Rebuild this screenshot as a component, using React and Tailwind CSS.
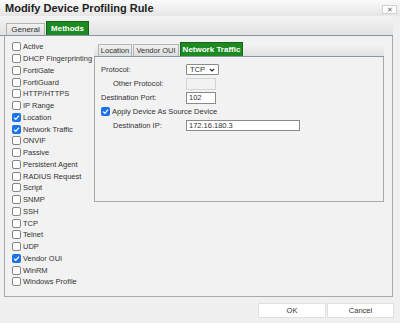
import React from "react";

const methods = [
  ["Active", false],
  ["DHCP Fingerprinting", false],
  ["FortiGate", false],
  ["FortiGuard", false],
  ["HTTP/HTTPS", false],
  ["IP Range", false],
  ["Location", true],
  ["Network Traffic", true],
  ["ONVIF", false],
  ["Passive", false],
  ["Persistent Agent", false],
  ["RADIUS Request", false],
  ["Script", false],
  ["SNMP", false],
  ["SSH", false],
  ["TCP", false],
  ["Telnet", false],
  ["UDP", false],
  ["Vendor OUI", true],
  ["WinRM", false],
  ["Windows Profile", false],
];

function Box({ checked }) {
  if (checked) {
    return (
      <span className="w-[9px] h-[9px] rounded-[2px] bg-[#1a73e8] flex items-center justify-center shrink-0">
        <svg width="7" height="7" viewBox="0 0 10 10">
          <path d="M1.5 5.2 L4 7.6 L8.6 2.2" fill="none" stroke="white" strokeWidth="1.8" />
        </svg>
      </span>
    );
  }
  return <span className="w-[9px] h-[9px] rounded-[2px] border border-[#858585] bg-white shrink-0" />;
}

function Tab({ label, active, className = "" }) {
  return active ? (
    <div
      className={
        "h-[14px] px-[6px] flex items-center whitespace-nowrap bg-[#1e8a22] border border-[#13661a] border-b-0 text-white font-bold text-[8px] " +
        className
      }
    >
      {label}
    </div>
  ) : (
    <div
      className={
        "h-[12px] px-[3px] flex items-center justify-center whitespace-nowrap bg-gradient-to-b from-[#f2f2f2] to-[#dcdcdc] border border-[#b4b4b4] border-b-0 text-[#333] text-[7.5px] " +
        className
      }
    >
      {label}
    </div>
  );
}

function FormRow({ label, indent, children }) {
  return (
    <div className="flex items-center h-[13px] mb-[1px]">
      <span className={"w-[85px] shrink-0 " + (indent ? "pl-[12px]" : "")}>{label}</span>
      {children}
    </div>
  );
}

export default function App() {
  return (
    <div
      className="w-[400px] h-[323px] bg-[#f0f0f0] flex flex-col text-[#333] overflow-hidden"
      style={{ fontFamily: '"Liberation Sans", Arial, sans-serif' }}
    >
      {/* Title */}
      <div className="h-[16px] flex items-center justify-between pl-[5px] pr-[3px] bg-gradient-to-b from-[#fafafa] to-[#e6e6e6]">
        <span className="font-bold text-[11px] text-[#222]">Modify Device Profiling Rule</span>
        <span className="w-[15px] h-[9px] mt-[2px] bg-white border border-[#d0d0d0] flex items-center justify-center text-[7px] text-[#666] leading-none">
          ✕
        </span>
      </div>

      {/* Outer tabs */}
      <div className="h-[20px] mr-[7px] flex items-end pl-[6px] gap-[1px] bg-gradient-to-b from-[#f4f4f4] to-[#e2e2e2] border-b border-[#8995a4]">
        <Tab label="General" className="w-[39px] text-[8px]" />
        <Tab label="Methods" active className="w-[43px] justify-center" />
      </div>

      {/* Panel */}
      <div className="h-[261px] ml-[4px] mr-[7px] border border-t-0 border-[#a9a9a9] flex bg-[#f2f2f2]">
        <div className="w-[89px] pl-[7px] pt-[5px] text-[7.5px]">
          {methods.map(([name, on]) => (
            <div key={name} className="h-[11.75px] flex items-center gap-[2px] whitespace-nowrap">
              <Box checked={on} />
              <span>{name}</span>
            </div>
          ))}
        </div>

        <div className="flex-1 pt-[7px] pr-[8px]">
          <div className="h-[14px] flex items-end pl-[4px] gap-[1px] bg-gradient-to-b from-[#f4f4f4] to-[#e2e2e2] border-b border-[#8995a4]">
            <Tab label="Location" className="w-[34px]" />
            <Tab label="Vendor OUI" className="w-[46px]" />
            <Tab label="Network Traffic" active className="w-[63px] justify-center" />
          </div>
          <div className="h-[145px] border border-t-0 border-[#a9a9a9] pl-[6px] pt-[6px] text-[7.5px]">
            <FormRow label="Protocol:">
              <span className="w-[33px] h-[11px] bg-white border border-[#8a8a8a] rounded-[1px] flex items-center justify-between px-[3px]">
                <span>TCP</span>
                <svg width="6" height="4" viewBox="0 0 6 4">
                  <path d="M0.8 0.8 L3 3 L5.2 0.8" fill="none" stroke="#222" strokeWidth="1.2" />
                </svg>
              </span>
            </FormRow>
            <FormRow label="Other Protocol:" indent>
              <span className="w-[30px] h-[12px] bg-[#f2f2f2] border border-[#d4d4d4]" />
            </FormRow>
            <FormRow label="Destination Port:">
              <span className="w-[30px] h-[12px] bg-white border border-[#8a8a8a] flex items-center pl-[2px]">102</span>
            </FormRow>
            <div className="flex items-center h-[13px] mb-[1px] gap-[2px]">
              <Box checked />
              <span>Apply Device As Source Device</span>
            </div>
            <FormRow label="Destination IP:" indent>
              <span className="w-[114px] h-[11px] bg-white border border-[#8a8a8a] flex items-center pl-[2px]">172.16.180.3</span>
            </FormRow>
          </div>
        </div>
      </div>

      {/* Footer */}
      <div className="flex justify-end gap-[1px] pr-[6px] pt-[6px]">
        <button className="w-[68px] h-[15px] bg-white border border-[#e0e0e0] text-[7.5px] text-[#333]">OK</button>
        <button className="w-[67px] h-[15px] bg-white border border-[#e0e0e0] text-[7.5px] text-[#333]">Cancel</button>
      </div>
    </div>
  );
}
